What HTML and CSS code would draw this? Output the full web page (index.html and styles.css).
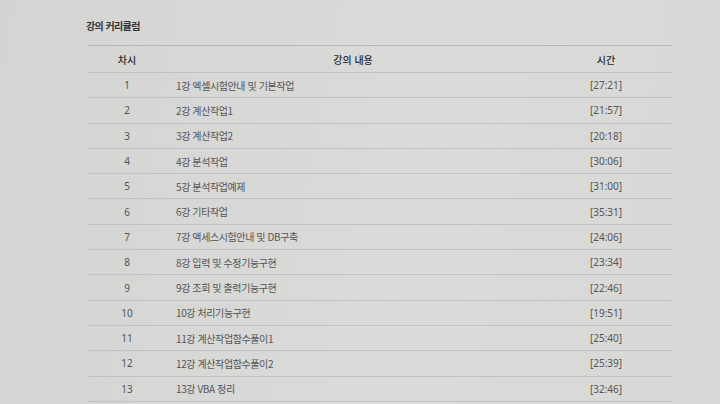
FILE: index.html
```html
<!DOCTYPE html>
<html lang="ko">

<head>
    <meta charset="UTF-8">
    <meta name="viewport" content="width=device-width, initial-scale=1.0">
    <title>강의 커리큘럼</title>
    <link rel="stylesheet" href="styles.css">
</head>

<body>
    <div class="curriculum">
        <h3 class="curriculum-title">강의 커리큘럼</h3>
        <table class="curriculum-table">
            <thead>
                <tr>
                    <th class="col-no">차시</th>
                    <th class="col-name">강의 내용</th>
                    <th class="col-time">시간</th>
                </tr>
            </thead>
            <tbody>
                <tr><td class="col-no">1</td><td class="col-name">1강 엑셀시험안내 및 기본작업</td><td class="col-time">[27:21]</td></tr>
                <tr><td class="col-no">2</td><td class="col-name">2강 계산작업1</td><td class="col-time">[21:57]</td></tr>
                <tr><td class="col-no">3</td><td class="col-name">3강 계산작업2</td><td class="col-time">[20:18]</td></tr>
                <tr><td class="col-no">4</td><td class="col-name">4강 분석작업</td><td class="col-time">[30:06]</td></tr>
                <tr><td class="col-no">5</td><td class="col-name">5강 분석작업예제</td><td class="col-time">[31:00]</td></tr>
                <tr><td class="col-no">6</td><td class="col-name">6강 기타작업</td><td class="col-time">[35:31]</td></tr>
                <tr><td class="col-no">7</td><td class="col-name">7강 액세스시험안내 및 DB구축</td><td class="col-time">[24:06]</td></tr>
                <tr><td class="col-no">8</td><td class="col-name">8강 입력 및 수정기능구현</td><td class="col-time">[23:34]</td></tr>
                <tr><td class="col-no">9</td><td class="col-name">9강 조회 및 출력기능구현</td><td class="col-time">[22:46]</td></tr>
                <tr><td class="col-no">10</td><td class="col-name">10강 처리기능구현</td><td class="col-time">[19:51]</td></tr>
                <tr><td class="col-no">11</td><td class="col-name">11강 계산작업함수풀이1</td><td class="col-time">[25:40]</td></tr>
                <tr><td class="col-no">12</td><td class="col-name">12강 계산작업함수풀이2</td><td class="col-time">[25:39]</td></tr>
                <tr><td class="col-no">13</td><td class="col-name">13강 VBA 정리</td><td class="col-time">[32:46]</td></tr>
            </tbody>
        </table>
    </div>
</body>

</html>
```

FILE: styles.css
```css
* {
    margin: 0;
    padding: 0;
    box-sizing: border-box;
}

body {
    min-height: 100vh;
    overflow: hidden;
    background: linear-gradient(100deg, #d4d4d2 0%, #dadad8 55%, #d8d8d6 100%);
    font-family: 'Noto Sans', 'Noto Sans CJK KR', sans-serif;
    color: #555;
}

.curriculum {
    padding: 19px 48px 0 86px;
}

.curriculum-title {
    font-family: 'Noto Sans CJK KR', sans-serif;
    font-size: 10px;
    line-height: 14px;
    font-weight: 700;
    letter-spacing: -0.6px;
    color: #333;
    margin-bottom: 12px;
}

.curriculum-table {
    width: 584px;
    margin-left: 2px;
    border-collapse: collapse;
    border-top: 1px solid #b8b8b6;
    font-size: 10px;
}

.curriculum-table th {
    font-family: 'Noto Sans CJK KR', sans-serif;
    font-weight: 500;
    color: #2a2a2a;
    height: 27px;
    border-bottom: 1px solid #c2c2c0;
}

.curriculum-table td {
    height: 25.3px;
    border-bottom: 1px solid #c2c2c0;
}

.col-no {
    width: 78px;
    text-align: center;
}

.col-name {
    width: 374px;
    text-align: center;
}

td.col-name {
    text-align: left;
    padding-left: 10px;
    font-family: 'Noto Sans CJK KR', sans-serif;
    letter-spacing: -0.4px;
}

.col-time {
    width: 132px;
    text-align: center;
}
```
